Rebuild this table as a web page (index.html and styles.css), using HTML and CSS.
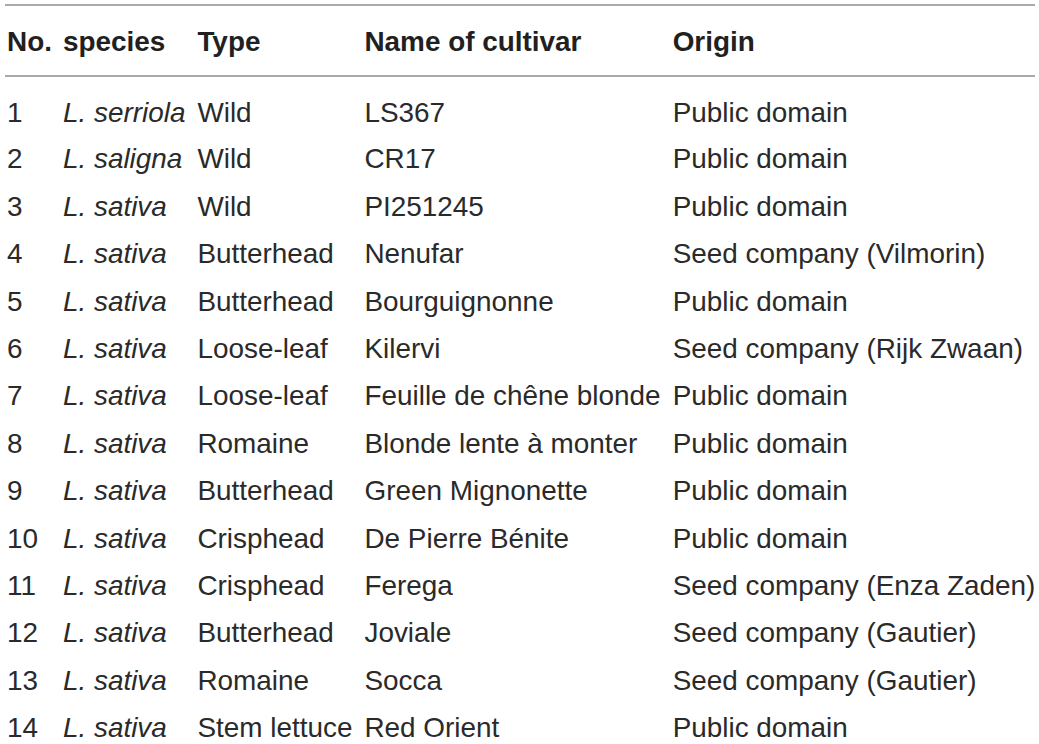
FILE: index.html
```html
<!DOCTYPE html>
<html>
<head>
<meta charset="utf-8">
<link rel="stylesheet" href="styles.css">
</head>
<body>
<div class="wrap">
<table class="tbl">
<thead>
<tr><th>No.</th><th>species</th><th>Type</th><th>Name of cultivar</th><th>Origin</th></tr>
</thead>
<tbody>
<tr><td>1</td><td><i>L. serriola</i></td><td>Wild</td><td>LS367</td><td>Public domain</td></tr>
<tr><td>2</td><td><i>L. saligna</i></td><td>Wild</td><td>CR17</td><td>Public domain</td></tr>
<tr><td>3</td><td><i>L. sativa</i></td><td>Wild</td><td>PI251245</td><td>Public domain</td></tr>
<tr><td>4</td><td><i>L. sativa</i></td><td>Butterhead</td><td>Nenufar</td><td>Seed company (Vilmorin)</td></tr>
<tr><td>5</td><td><i>L. sativa</i></td><td>Butterhead</td><td>Bourguignonne</td><td>Public domain</td></tr>
<tr><td>6</td><td><i>L. sativa</i></td><td>Loose-leaf</td><td>Kilervi</td><td>Seed company (Rijk Zwaan)</td></tr>
<tr><td>7</td><td><i>L. sativa</i></td><td>Loose-leaf</td><td>Feuille de chêne blonde</td><td>Public domain</td></tr>
<tr><td>8</td><td><i>L. sativa</i></td><td>Romaine</td><td>Blonde lente à monter</td><td>Public domain</td></tr>
<tr><td>9</td><td><i>L. sativa</i></td><td>Butterhead</td><td>Green Mignonette</td><td>Public domain</td></tr>
<tr><td>10</td><td><i>L. sativa</i></td><td>Crisphead</td><td>De Pierre Bénite</td><td>Public domain</td></tr>
<tr><td>11</td><td><i>L. sativa</i></td><td>Crisphead</td><td>Ferega</td><td>Seed company (Enza Zaden)</td></tr>
<tr><td>12</td><td><i>L. sativa</i></td><td>Butterhead</td><td>Joviale</td><td>Seed company (Gautier)</td></tr>
<tr><td>13</td><td><i>L. sativa</i></td><td>Romaine</td><td>Socca</td><td>Seed company (Gautier)</td></tr>
<tr><td>14</td><td><i>L. sativa</i></td><td>Stem lettuce</td><td>Red Orient</td><td>Public domain</td></tr>
</tbody>
</table>
</div>
</body>
</html>
```
FILE: styles.css
```css
html, body {
  margin: 0;
  padding: 0;
  background: #ffffff;
}
.wrap {
  padding: 4px 0 0 5px;
}
.tbl {
  border-collapse: collapse;
  font-family: "Liberation Sans", Arial, sans-serif;
  font-size: 27.9px;
  color: #2a2a2a;
  white-space: nowrap;
}
.tbl thead tr {
  border-top: 2px solid #a9a9a9;
  border-bottom: 2px solid #a9a9a9;
}
.tbl th {
  text-align: left;
  font-weight: bold;
  color: #231f20;
  height: 71px;
  padding: 2px 6px 0 6px;
  box-sizing: border-box;
}
.tbl td {
  height: 47.4px;
  padding: 0 6px;
  box-sizing: border-box;
  vertical-align: middle;
}
.tbl th:first-child, .tbl td:first-child {
  padding-left: 2px;
  padding-right: 5px;
}
.tbl th:last-child, .tbl td:last-child {
  padding-right: 0;
}
.tbl tbody tr:first-child td {
  height: 59.8px;
  padding-top: 12.4px;
}
.tbl i {
  font-style: italic;
}
```
